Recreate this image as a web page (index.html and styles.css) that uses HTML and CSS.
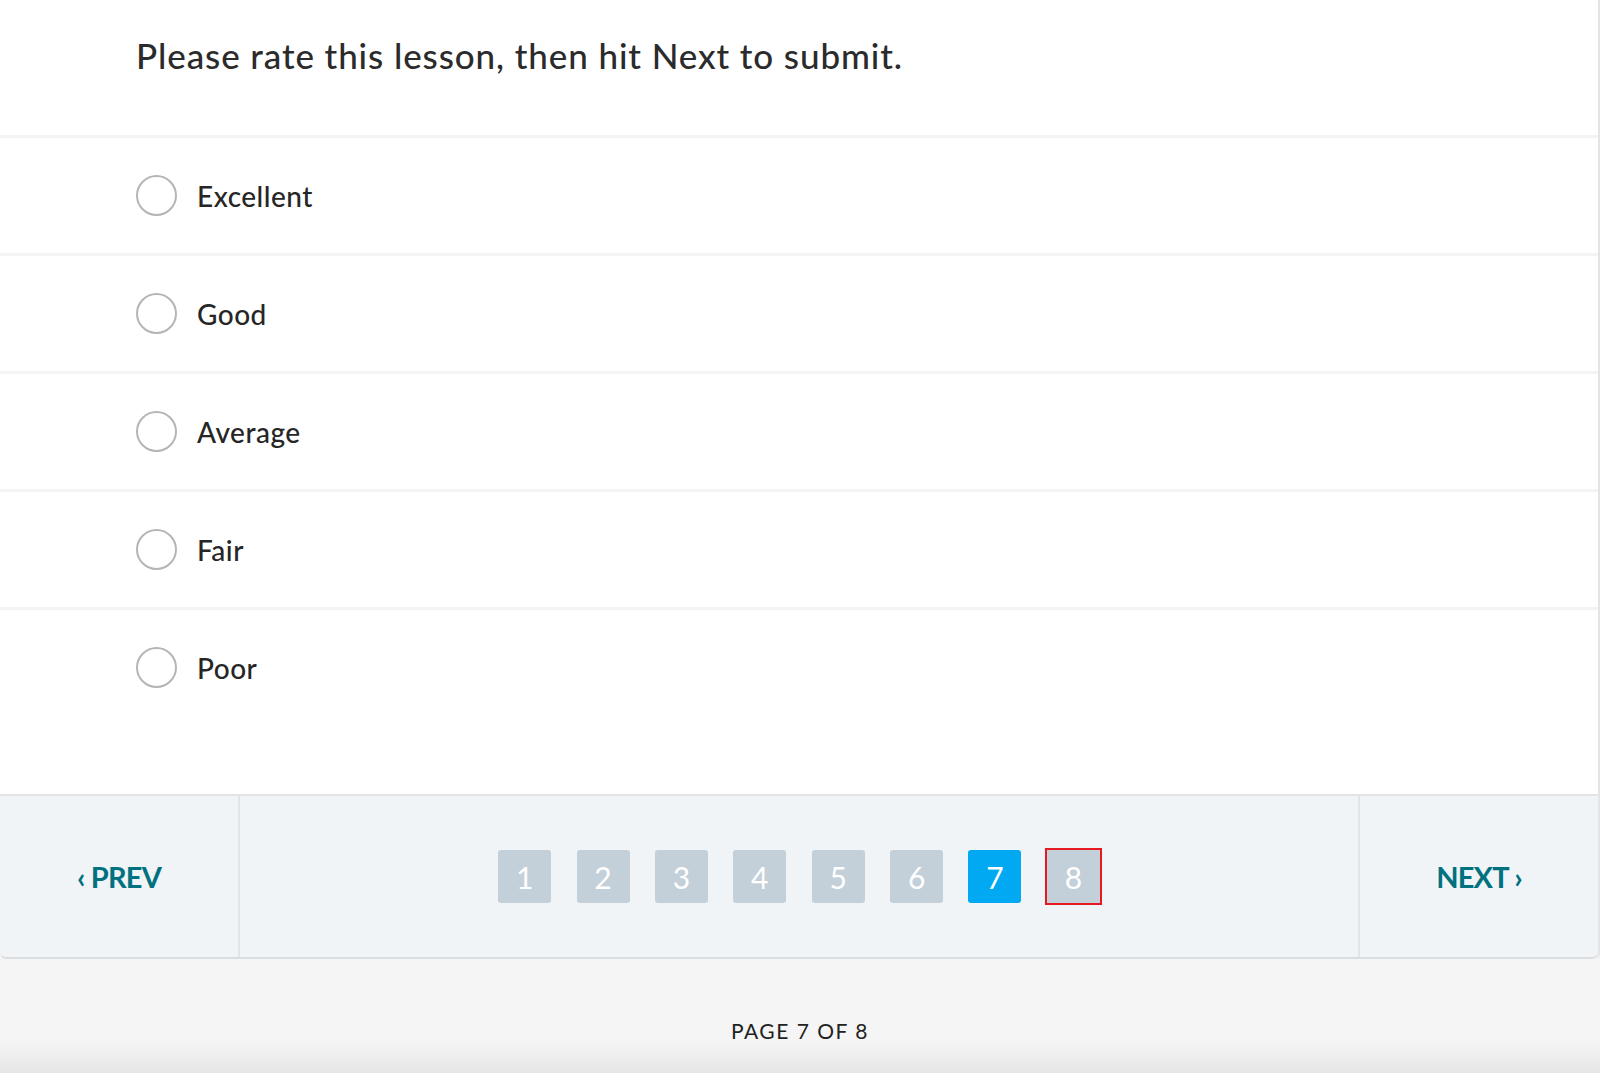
FILE: index.html
```html
<!DOCTYPE html>
<html lang="en">
<head>
<meta charset="utf-8">
<title>Rate this lesson</title>
<link rel="stylesheet" href="styles.css">
</head>
<body>
<div class="card">
  <div class="question">
    <h1 class="question-title">Please rate this lesson, then hit Next to submit.</h1>
  </div>
  <ul class="options">
    <li class="option"><span class="radio"></span><span class="option-label">Excellent</span></li>
    <li class="option"><span class="radio"></span><span class="option-label">Good</span></li>
    <li class="option"><span class="radio"></span><span class="option-label">Average</span></li>
    <li class="option"><span class="radio"></span><span class="option-label">Fair</span></li>
    <li class="option"><span class="radio"></span><span class="option-label">Poor</span></li>
  </ul>
  <nav class="pager">
    <div class="pager-cell pager-prev"><span class="nav-link">‹ PREV</span></div>
    <div class="pager-cell pager-pages">
      <span class="page-btn">1</span>
      <span class="page-btn">2</span>
      <span class="page-btn">3</span>
      <span class="page-btn">4</span>
      <span class="page-btn">5</span>
      <span class="page-btn">6</span>
      <span class="page-btn page-btn-active">7</span>
      <span class="page-btn page-btn-focus">8</span>
    </div>
    <div class="pager-cell pager-next"><span class="nav-link">NEXT ›</span></div>
  </nav>
</div>
<footer class="page-footer">PAGE 7 OF 8</footer>
</body>
</html>
```
FILE: styles.css
```css
* { box-sizing: border-box; }
html, body { height: 100%; }
body {
  margin: 0;
  font-family: Lato, "Open Sans", "Liberation Sans", sans-serif;
  color: #2a2a2a;
  background: linear-gradient(to bottom, #f5f5f5 0, #f5f5f5 1040px, #e6e6e6 1073px);
  min-height: 1073px;
}
.card {
  background: #ffffff;
  width: 1600px;
  border-right: 2px solid #e4e4e4;
  border-bottom-left-radius: 6px;
  border-bottom-right-radius: 6px;
}
.question {
  height: 135px;
  padding: 34px 0 0 136px;
}
.question-title {
  margin: 0;
  font-size: 35px;
  line-height: 42px;
  font-weight: 500;
  letter-spacing: 0.9px;
  color: #2b2b2b;
}
.options {
  list-style: none;
  margin: 0;
  padding: 0 0 69px 0;
}
.option {
  height: 118px;
  border-top: 3px solid #f3f5f5;
  display: flex;
  align-items: center;
  padding-left: 136px;
  gap: 20px;
}
.radio {
  width: 41px;
  height: 41px;
  border-radius: 50%;
  border: 2px solid #b5b5b5;
  flex: none;
}
.option-label {
  font-size: 28px;
  font-weight: 500;
  letter-spacing: 0.5px;
  color: #262626;
}
.pager {
  display: grid;
  grid-template-columns: 240px 1fr 240px;
  height: 165px;
  background: #f0f4f7;
  border-top: 2px solid #e1e5e8;
  border-bottom: 2px solid #d9dde0;
  border-bottom-left-radius: 6px;
  border-bottom-right-radius: 6px;
}
.pager-cell {
  display: flex;
  align-items: center;
  justify-content: center;
}
.pager-prev { border-right: 2px solid #e1e5e8; }
.pager-next { border-left: 2px solid #e1e5e8; }
.nav-link {
  font-size: 29px;
  font-weight: 700;
  color: #00717f;
  letter-spacing: -0.8px;
}
.pager-pages { gap: 25.4px; }
.page-btn {
  width: 53px;
  height: 53px;
  border-radius: 3px;
  background: #c4d0d9;
  color: #ffffff;
  font-size: 30px;
  display: flex;
  align-items: center;
  justify-content: center;
}
.page-btn-active { background: #00a9f1; }
.page-btn-focus {
  border-radius: 0;
  outline: 2px solid #e5191f;
  outline-offset: 0;
}
.page-footer {
  text-align: center;
  padding-top: 58px;
  font-size: 21px;
  line-height: 28px;
  letter-spacing: 1.5px;
  color: #222222;
}
```
